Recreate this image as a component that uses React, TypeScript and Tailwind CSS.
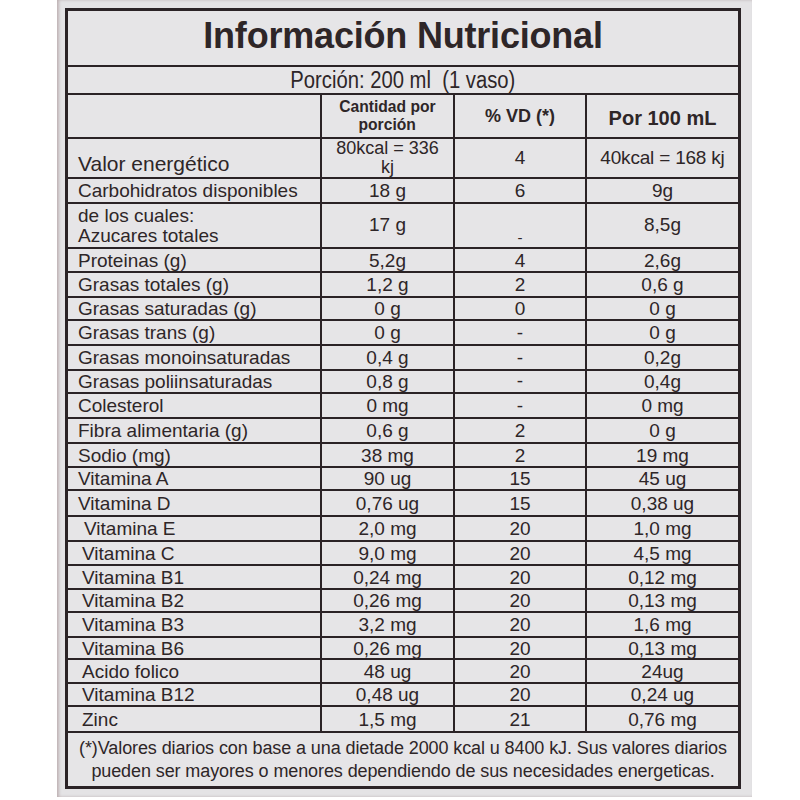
const ink = "text-[#2e2628]";

type Row = {
  label: string;
  qty: string;
  vd: string;
  per: string;
  h: string;
  indent?: string;
};

const rows: Row[] = [
  { label: "Carbohidratos disponibles", qty: "18 g", vd: "6", per: "9g", h: "h-[23px]" },
  { label: "Proteinas (g)", qty: "5,2g", vd: "4", per: "2,6g", h: "h-[22px]" },
  { label: "Grasas totales (g)", qty: "1,2 g", vd: "2", per: "0,6 g", h: "h-[23px]" },
  { label: "Grasas saturadas (g)", qty: "0 g", vd: "0", per: "0 g", h: "h-[21px]" },
  { label: "Grasas trans (g)", qty: "0 g", vd: "-", per: "0 g", h: "h-[23px]" },
  { label: "Grasas monoinsaturadas", qty: "0,4 g", vd: "-", per: "0,2g", h: "h-[23px]" },
  { label: "Grasas poliinsaturadas", qty: "0,8 g", vd: "-", per: "0,4g", h: "h-[21px]" },
  { label: "Colesterol", qty: "0 mg", vd: "-", per: "0 mg", h: "h-[23px]" },
  { label: "Fibra alimentaria (g)", qty: "0,6 g", vd: "2", per: "0 g", h: "h-[23px]" },
  { label: "Sodio (mg)", qty: "38 mg", vd: "2", per: "19 mg", h: "h-[22px]" },
  { label: "Vitamina A", qty: "90 ug", vd: "15", per: "45 ug", h: "h-[21px]" },
  { label: "Vitamina D", qty: "0,76 ug", vd: "15", per: "0,38 ug", h: "h-[24px]" },
  { label: "Vitamina E", qty: "2,0 mg", vd: "20", per: "1,0 mg", h: "h-[23px]", indent: "pl-[16px]" },
  { label: "Vitamina C", qty: "9,0 mg", vd: "20", per: "4,5 mg", h: "h-[22px]", indent: "pl-[14px]" },
  { label: "Vitamina B1", qty: "0,24 mg", vd: "20", per: "0,12 mg", h: "h-[22px]", indent: "pl-[14px]" },
  { label: "Vitamina B2", qty: "0,26 mg", vd: "20", per: "0,13 mg", h: "h-[21px]", indent: "pl-[14px]" },
  { label: "Vitamina B3", qty: "3,2 mg", vd: "20", per: "1,6 mg", h: "h-[23px]", indent: "pl-[14px]" },
  { label: "Vitamina B6", qty: "0,26 mg", vd: "20", per: "0,13 mg", h: "h-[20px]", indent: "pl-[14px]" },
  { label: "Acido folico", qty: "48 ug", vd: "20", per: "24ug", h: "h-[22px]", indent: "pl-[14px]" },
  { label: "Vitamina B12", qty: "0,48 ug", vd: "20", per: "0,24 ug", h: "h-[21px]", indent: "pl-[14px]" },
  { label: "Zinc", qty: "1,5 mg", vd: "21", per: "0,76 mg", h: "h-[24px]", indent: "pl-[14px]" },
];

const cell = "bg-[#e6e5e7] overflow-hidden";
const grid = "grid grid-cols-[252px_131px_130px_151px] gap-x-[2px]";

function DataRow({ r }: { r: Row }) {
  const dash = r.vd === "-";
  return (
    <div className={`${grid} ${r.h}`}>
      <div className={`${cell} ${r.indent ?? "pl-[10px]"} flex items-center text-[19px] leading-none`}>{r.label}</div>
      <div className={`${cell} flex items-center justify-center text-[19px] leading-none`}>{r.qty}</div>
      <div className={`${cell} flex justify-center text-[19px] leading-none ${dash ? "items-end pb-[2px] text-[15px]" : "items-center"}`}>
        {r.vd}
      </div>
      <div className={`${cell} flex items-center justify-center text-[19px] leading-none`}>{r.per}</div>
    </div>
  );
}

export default function App() {
  return (
    <div className="w-[800px] h-[800px] bg-white font-['Liberation_Sans',Arial,sans-serif]">
      <div className="ml-[57px] w-[695px] h-[797px] bg-[#e4e3e5] pt-[8px] pl-[8px] shadow-[inset_2px_0_3px_rgba(120,90,90,0.35)]">
        <div className={`w-[676px] border-[3px] border-[#2b2326] bg-[#2b2326] flex flex-col gap-y-[2px] ${ink}`}>
          <div className={`${cell} h-[54px] flex items-center justify-center pb-[4px] text-[36px] font-bold tracking-[-0.2px]`}>
            Información Nutricional
          </div>
          <div className={`${cell} h-[26px] flex items-center justify-center text-[23px] leading-none`}>
            <span className="inline-block scale-x-[0.88]">Porción: 200 ml&nbsp; (1 vaso)</span>
          </div>
          <div className={`${grid} h-[42px]`}>
            <div className={cell}></div>
            <div className={`${cell} flex flex-col items-center justify-center text-[17px] font-bold leading-[18px]`}>
              <span className="inline-block scale-x-[0.92]">Cantidad por</span>
              <span className="inline-block scale-x-[0.92]">porción</span>
            </div>
            <div className={`${cell} flex items-center justify-center text-[18px] font-bold`}>% VD (*)</div>
            <div className={`${cell} flex items-center justify-center pt-[4px] text-[20px] font-bold`}>Por 100 mL</div>
          </div>
          <div className={`${grid} h-[38px]`}>
            <div className={`${cell} pl-[10px] flex items-end pb-[3px] text-[21px] leading-none`}>Valor energético</div>
            <div className={`${cell} flex flex-col items-center justify-center text-[18px] leading-[19px]`}>
              <span>80kcal = 336</span>
              <span>kj</span>
            </div>
            <div className={`${cell} flex items-center justify-center text-[19px]`}>4</div>
            <div className={`${cell} flex items-center justify-center text-[19px] tracking-[-0.2px]`}>40kcal = 168 kj</div>
          </div>
          <DataRow r={rows[0]} />
          <div className={`${grid} h-[43px]`}>
            <div className={`${cell} pl-[10px] flex flex-col justify-center text-[19px] leading-[20px]`}>
              <span>de los cuales:</span>
              <span>Azucares totales</span>
            </div>
            <div className={`${cell} flex items-center justify-center text-[19px]`}>17 g</div>
            <div className={`${cell} flex items-end justify-center pb-[2px] text-[15px] leading-none`}>-</div>
            <div className={`${cell} flex items-center justify-center text-[19px]`}>8,5g</div>
          </div>
          {rows.slice(1).map((r) => (
            <DataRow key={r.label} r={r} />
          ))}
          <div className={`${cell} h-[53px] flex flex-col items-center justify-center text-[18px] leading-[23px] tracking-[-0.1px]`}>
            <span>(*)Valores diarios con base a una dietade 2000 kcal u 8400 kJ. Sus valores diarios</span>
            <span>pueden ser mayores o menores dependiendo de sus necesidades energeticas.</span>
          </div>
        </div>
      </div>
    </div>
  );
}
